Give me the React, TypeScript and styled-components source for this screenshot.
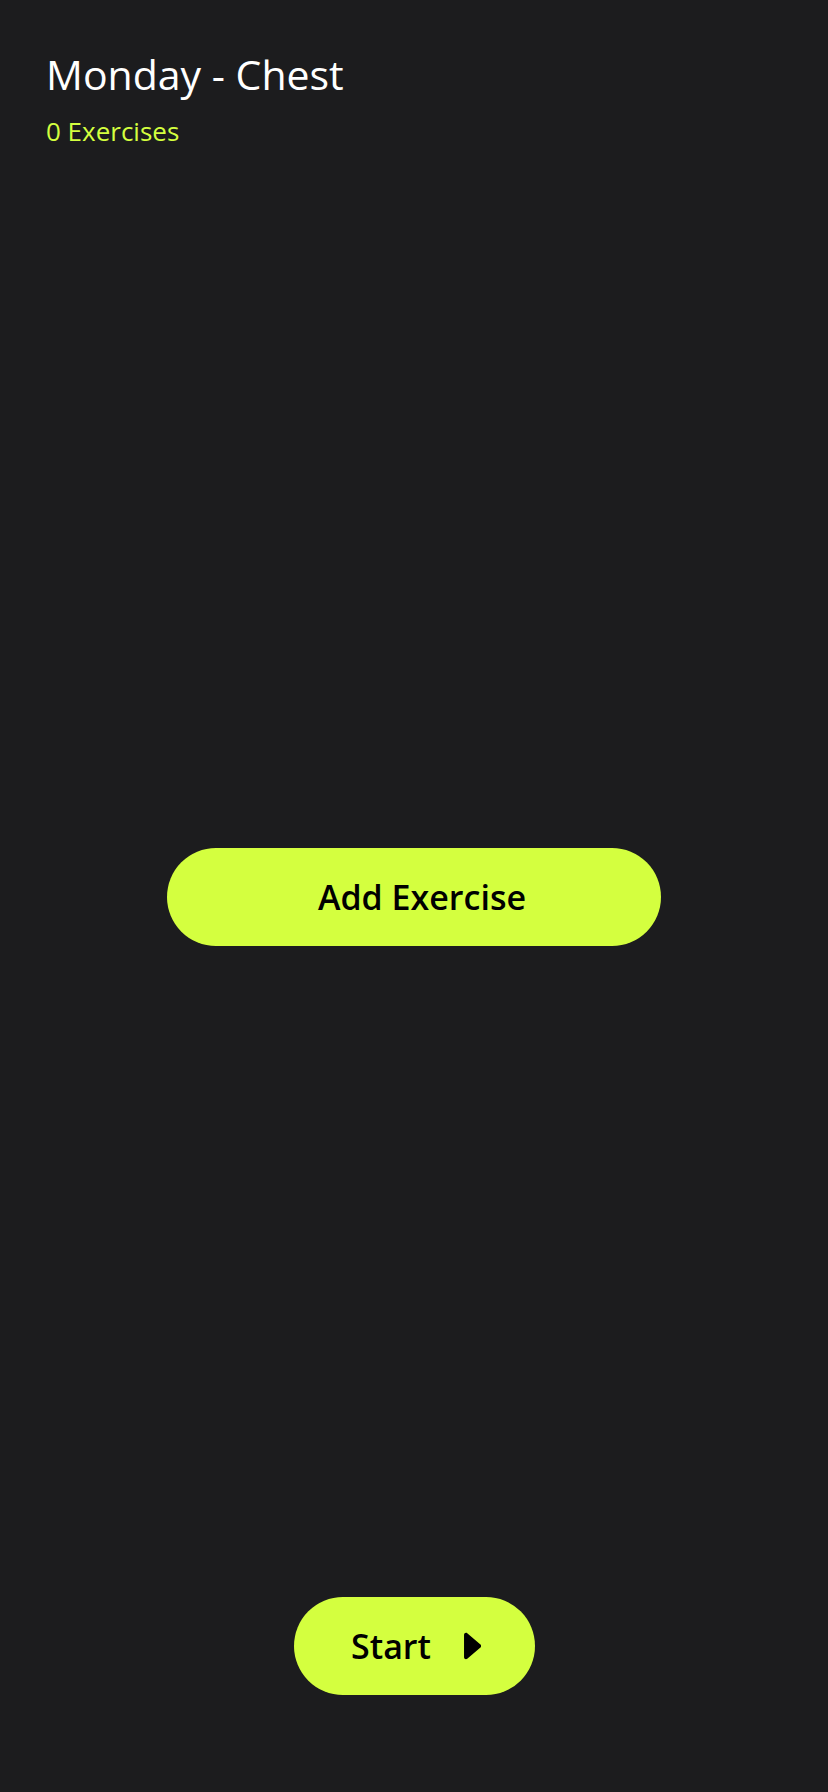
import React from "react";
import styled, { createGlobalStyle } from "styled-components";

const GlobalStyle = createGlobalStyle`
  html, body {
    margin: 0;
    padding: 0;
    background: #1c1c1e;
  }
  * { box-sizing: border-box; }
`;

const Screen = styled.div`
  min-height: 1792px;
  display: flex;
  flex-direction: column;
  padding: 46px 46px 97px;
  background: #1c1c1e;
  font-family: "Open Sans", "Noto Sans", sans-serif;
`;

const Header = styled.header`
  display: flex;
  flex-direction: column;
  gap: 12px;
`;

const Title = styled.h1`
  margin: 0;
  font-size: 41px;
  font-weight: 500;
  line-height: 56px;
  color: #ffffff;
`;

const Subtitle = styled.p`
  margin: 0;
  font-size: 26px;
  font-weight: 400;
  line-height: 35px;
  color: #d4ff3f;
`;

const Main = styled.main`
  flex: 1;
  display: flex;
  align-items: center;
  justify-content: center;
  padding-top: 48px;
`;

const Footer = styled.footer`
  display: flex;
  justify-content: center;
`;

const PillButton = styled.button<{ $width: number; $shift?: number }>`
  width: ${(p) => p.$width}px;
  height: 98px;
  border: none;
  border-radius: 49px;
  background: #d4ff3f;
  color: #000000;
  font-family: "Open Sans", "Noto Sans", sans-serif;
  font-size: 34px;
  font-weight: 600;
  display: flex;
  align-items: center;
  justify-content: center;
  gap: 33px;
  padding: 0 0 0 ${(p) => p.$shift ?? 0}px;
  cursor: pointer;
`;

const Caret = () => (
  <svg width="17" height="28" viewBox="150 93 210 326" fill="#000">
    <path d="M190.06 414l163.12-139.78a24 24 0 000-36.44L190.06 98c-15.57-13.34-39.62-2.28-39.62 18.22v279.6c0 20.5 24.05 31.56 39.62 18.18z" />
  </svg>
);

export default function App() {
  return (
    <>
      <GlobalStyle />
      <Screen>
        <Header>
          <Title>Monday - Chest</Title>
          <Subtitle>0 Exercises</Subtitle>
        </Header>
        <Main>
          <PillButton $width={494} $shift={16}>Add Exercise</PillButton>
        </Main>
        <Footer>
          <PillButton $width={241} $shift={4}>
            <span>Start</span>
            <Caret />
          </PillButton>
        </Footer>
      </Screen>
    </>
  );
}
